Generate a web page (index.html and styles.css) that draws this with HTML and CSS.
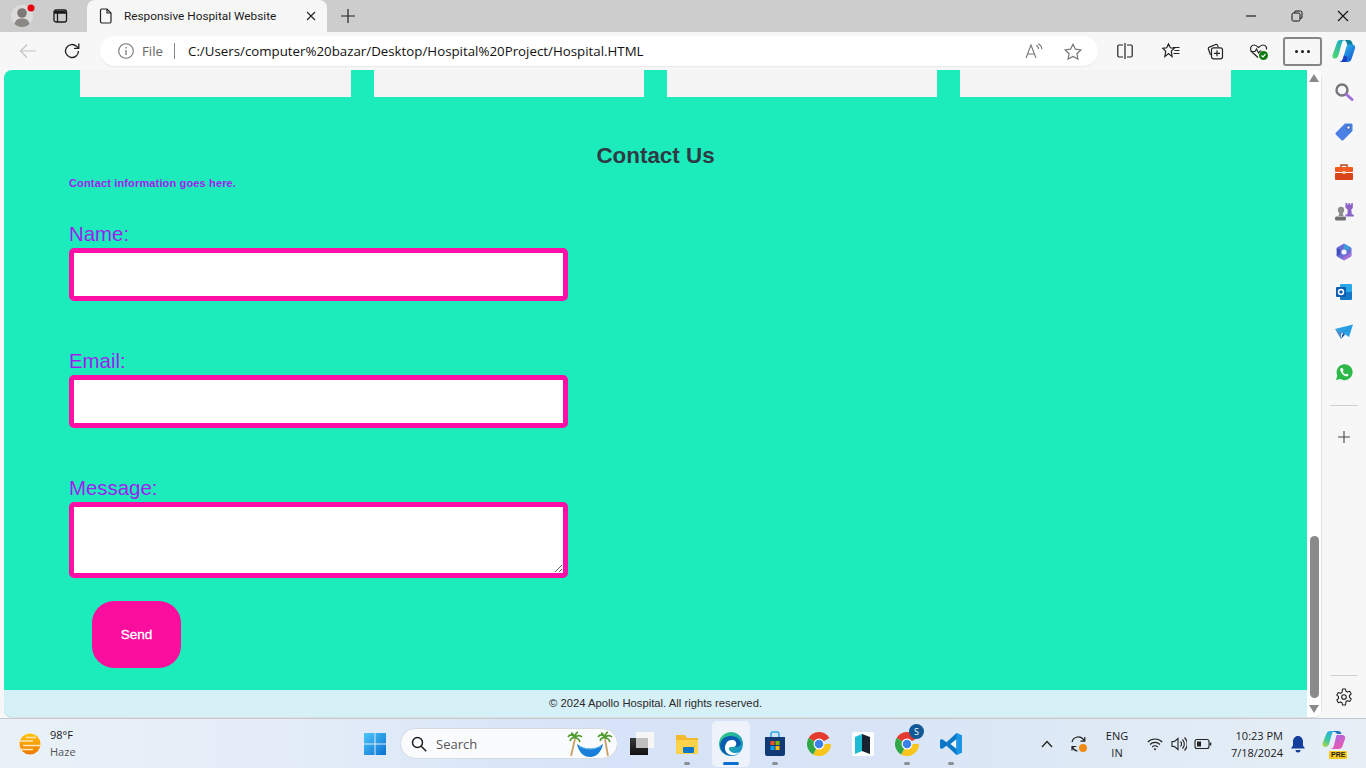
FILE: index.html
```html
<!DOCTYPE html>
<html lang="en">
<head>
<meta charset="utf-8">
<title>Responsive Hospital Website</title>
<link rel="stylesheet" href="styles.css">
</head>
<body>
<div class="tabstrip">
  <div class="slot s-avatar">
    <svg class="avatar" width="26" height="26" viewBox="0 0 26 26"><circle cx="11" cy="13" r="11" fill="#dcdcdc"/><circle cx="11" cy="10" r="4.800" fill="#7d7a76"/><path d="M3.500 21c1-4.500 4-5.500 7.500-5.500s6.500 1 7.500 5.500c-2 2-4.500 3-7.500 3s-5.500-1-7.500-3z" fill="#8b8884"/><circle cx="20" cy="5" r="3.500" fill="#e8000d"/></svg>
    </div>
  <div class="slot s-tabs">
    <svg width="16" height="16" viewBox="0 0 16 16" fill="none" stroke="#1a1a1a" stroke-width="1.300"><rect x="2" y="2" width="12.500" height="12" rx="2"/><path d="M2 5h12.500M5.500 5v9" /><path d="M2.500 3h11v2h-11z" fill="#1a1a1a" stroke="none"/></svg>
  </div>
  <div class="tab">
    <svg class="tab-doc" width="14" height="16" viewBox="0 0 14 16" fill="none" stroke="#222" stroke-width="1.200"><path d="M2.500 1h5.500l4 4v8.500a1.500 1.500 0 0 1-1.500 1.500h-8a1.500 1.500 0 0 1-1-1.500v-11a1.500 1.500 0 0 1 1-1.500z"/><path d="M8 1v4h4"/></svg>
    <span class="tab-title">Responsive Hospital Website</span>
    <svg class="tab-x" width="10" height="10" viewBox="0 0 10 10" stroke="#222" stroke-width="1.100"><path d="M1 1l8 8M9 1l-8 8"/></svg>
  </div>
  <div class="slot s-plus">
    <svg width="14" height="14" viewBox="0 0 14 14" stroke="#222" stroke-width="1.200"><path d="M7 0v14M0 7h14"/></svg>
  </div>
  <div class="winctl">
    <div class="slot s-win"><svg width="12" height="12" viewBox="0 0 12 12" stroke="#111" stroke-width="1.100"><path d="M1 6h10"/></svg></div>
    <div class="slot s-win"><svg width="12" height="12" viewBox="0 0 12 12" fill="none" stroke="#111" stroke-width="1"><rect x="1" y="3" width="8" height="8" rx="1.500"/><path d="M3.500 3v-.500a1.500 1.500 0 0 1 1.500-1.500h4.500a1.500 1.500 0 0 1 1.500 1.500v4.500a1.500 1.500 0 0 1-1.500 1.500h-.500"/></svg></div>
    <div class="slot s-win"><svg width="12" height="12" viewBox="0 0 12 12" stroke="#111" stroke-width="1.100"><path d="M1 1l10 10M11 1l-10 10"/></svg></div>
  </div>
</div>

<div class="toolbar">
  <div class="slot s-back"><svg width="18" height="16" viewBox="0 0 18 16" fill="none" stroke="#c4c4c4" stroke-width="1.200"><path d="M17 8H1.500M8 1.500L1.500 8 8 14.500"/></svg></div>
  <div class="slot s-refresh"><svg width="18" height="18" viewBox="0 0 18 18" fill="none" stroke="#222" stroke-width="1.300"><path d="M15.500 9a6.500 6.500 0 1 1-2-4.700L15.500 6"/><path d="M15.800 1.500V6.300H11"/></svg></div>
  <div class="address">
    <svg class="a-info" width="16" height="16" viewBox="0 0 16 16" fill="none" stroke="#777" stroke-width="1.100"><circle cx="8" cy="8" r="7.300"/><path d="M8 7v5M8 4v1.500" stroke-width="1.300"/></svg>
    <span class="a-file">File</span>
    <span class="a-sep"></span>
    <span class="a-url">C:/Users/computer%20bazar/Desktop/Hospital%20Project/Hospital.HTML</span>
    <svg class="a-read" width="18" height="16" viewBox="0 0 18 16" fill="none" stroke="#777" stroke-width="1.100"><path d="M1 15L6 2l5 13M2.800 11h6.400"/><path d="M11 2.500c1.500.5 2.500 2 2.500 3.500M13 .8c2.300 1 3.800 3 3.800 5.500"/></svg>
    <svg class="a-star" width="18" height="17" viewBox="0 0 18 17" fill="none" stroke="#777" stroke-width="1.200"><path d="M9 1.200l2.400 5 5.500.7-4 3.800 1 5.400L9 13.500l-4.900 2.600 1-5.400-4-3.800 5.500-.7z"/></svg>
  </div>
  <div class="slot s-tool s-first"><svg width="16" height="16" viewBox="0 0 16 16" fill="none" stroke="#222" stroke-width="1.200"><path d="M6 2H2a1.200 1.200 0 0 0-1.200 1.200v9.600A1.200 1.200 0 0 0 2 14h4M10 2h4a1.200 1.200 0 0 1 1.200 1.200v9.600A1.200 1.200 0 0 1 14 14h-4M8 0v16"/></svg></div>
  <div class="slot s-tool s-gap"><svg width="18" height="18" viewBox="0 0 18 18" fill="none" stroke="#222" stroke-width="1.200"><path d="M6.500 2l1.800 3.800 4 .5-3 2.800.8 5.500-3.600-3-3.600 3 .8-5.500-3-2.800 4-.5zM11 5.500h6.500M12.500 8.500h5M11.500 11.500h6"/></svg></div>
  <div class="slot s-tool"><svg width="18" height="18" viewBox="0 0 18 18" fill="none" stroke="#222" stroke-width="1.200"><path d="M4.500 13L2.400 7a1.500 1.500 0 0 1 1-1.900l6.200-2.600a1.500 1.500 0 0 1 2 .9l.6 1.600"/><rect x="5.500" y="5.800" width="11" height="11" rx="2"/><path d="M11 8.300v6M8 11.300h6"/></svg></div>
  <div class="slot s-tool"><svg width="20" height="20" viewBox="0 0 20 20" fill="none"><path d="M9 16.500L3 11c-3-3-1-7 2-7 2 0 3 1 4.500 2.500C11 5 12 4 14 4c2.500 0 4 2 3.500 4.500" stroke="#222" stroke-width="1.200"/><path d="M1.500 10.500H6l1.500-2.500 2 4 1.500-2h1.500" stroke="#222" stroke-width="1.100"/><circle cx="14.500" cy="14.500" r="4.500" fill="#107c10"/><path d="M12.500 14.500l1.500 1.500 2.500-2.800" stroke="#fff" stroke-width="1.200"/></svg></div>
  <div class="more"><i></i><i></i><i></i></div>
  <div class="slot s-copilot">
    <svg width="24" height="24" viewBox="0 0 24 24"><defs><linearGradient id="cpa" x1="0" y1="0" x2="1" y2="1"><stop offset="0" stop-color="#2fc8f0"/><stop offset="1" stop-color="#1450d0"/></linearGradient><linearGradient id="cpb" x1="0.800" y1="0" x2="0.200" y2="1"><stop offset="0" stop-color="#1ca8c8"/><stop offset="1" stop-color="#4ed870"/></linearGradient></defs><path d="M9 1h8c2 0 3 1.500 3.300 3l.5 2h-5.500l-.8-2.500C14.300 2 13 1 12 1z" fill="#0b7f9c"/><path d="M8 1h5c-1.500 0-2.600 1.200-3 2.500L6.500 16c-.6 2-1.800 3.500-3.800 3.500C.8 19.500 0 17.800.6 16L5 3.500C5.500 2 6.500 1 8 1z" fill="url(#cpb)"/><path d="M16.500 5.500h3.500c2.500 0 3.700 2 3 4l-3.500 10.500C19 22 17.500 23 15.500 23H7c2 0 3.200-1.200 3.800-3L14.500 7.500c.3-1.200 1-2 2-2z" fill="url(#cpa)"/><path d="M7 23c2 0 3.200-1.200 3.800-3l1.200-3.500 3.500 1.500-1 5z" fill="#1c3ec8"/></svg>
  </div>
</div>

<div class="workspace">
  <div class="viewport">
    <main class="page">
      <div class="cards"><div class="card"></div><div class="card"></div><div class="card"></div><div class="card"></div></div>
      <section class="contact">
        <h2>Contact Us</h2>
        <p class="info">Contact information goes here.</p>
        <form class="form">
          <div class="field"><label for="n">Name:</label><input id="n" type="text"></div>
          <div class="field"><label for="e">Email:</label><input id="e" type="text"></div>
          <div class="field"><label for="m">Message:</label><textarea id="m"></textarea></div>
          <button type="button">Send</button>
        </form>
      </section>
      <footer class="foot">© 2024 Apollo Hospital. All rights reserved.</footer>
    </main>
    <div class="scrollbar">
      <span class="arrow up"></span>
      <span class="thumb"></span>
      <span class="arrow down"></span>
    </div>
  </div>
  <aside class="sidebar">
    <div class="side-slot"><svg width="20" height="20" viewBox="0 0 20 20" fill="none"><circle cx="8" cy="8" r="5.500" stroke="#77757a" stroke-width="2.400"/><path d="M12.500 12.500l5.500 5" stroke="#a070d8" stroke-width="3" stroke-linecap="round"/></svg></div>
    <div class="side-slot"><svg width="20" height="20" viewBox="0 0 20 20"><path d="M11 1.500h6c1 0 1.500.5 1.500 1.500v6L9.500 18c-.7.7-1.500.7-2.200 0L2 12.700c-.7-.7-.7-1.500 0-2.200z" fill="#4a80e4"/><circle cx="14.500" cy="5.500" r="1.800" fill="#e8e8f4" stroke="#33508c" stroke-width=".8"/></svg></div>
    <div class="side-slot"><svg width="20" height="18" viewBox="0 0 20 18"><path d="M7 4V2h6v2" fill="none" stroke="#b04a1c" stroke-width="1.500"/><rect x="1" y="4" width="18" height="5" rx="1" fill="#f05a22"/><rect x="1" y="10" width="18" height="7" rx="1" fill="#d8431a"/><rect x="8.500" y="8" width="3" height="3" fill="#f4c8a8"/></svg></div>
    <div class="side-slot"><svg width="20" height="20" viewBox="0 0 20 20"><circle cx="7" cy="8" r="3.200" fill="#8d8d8d"/><path d="M5.500 10h3l1 4h-5z" fill="#8d8d8d"/><rect x="1" y="14.500" width="11" height="4" rx="1.500" fill="#707070"/><path d="M11.500 1h1.700v1.500h1.300V1h1.500v1.500h1.300V1h1.500v5l-1.500 1.500.5 5h2v2h-8.500v-2h2l.5-5L11.500 6z" fill="#8b62c8"/></svg></div>
    <div class="side-slot"><svg width="18" height="18" viewBox="0 0 18 18" stroke-linejoin="round"><path d="M9 1L16 5v8l-7 4-7-4V5z" fill="#6a6fd8" stroke="#6a6fd8" stroke-width="1"/><path d="M9 1L16 5 12 7.500 9 5.500z" fill="#3aa0d8"/><path d="M16 9v4l-7 4-2-2 6-3z" fill="#b070d8"/><path d="M2 5v8l3.500-2V7z" fill="#4050b8"/><circle cx="9" cy="9" r="2.600" fill="#f4f4fa"/></svg></div>
    <div class="side-slot"><svg width="18" height="18" viewBox="0 0 18 18"><rect x="5" y="1" width="12" height="15" rx="1" fill="#28a8e8"/><path d="M5 9h12v7a1 1 0 0 1-1 1H6a1 1 0 0 1-1-1z" fill="#1478c8"/><rect x="1" y="4" width="10" height="10" rx="1" fill="#0a5cb0"/><circle cx="6" cy="9" r="2.500" fill="none" stroke="#fff" stroke-width="1.500"/></svg></div>
    <div class="side-slot"><svg width="18" height="16" viewBox="0 0 18 16"><path d="M0 5L18 .5 14 13 8 9z" fill="#2aa0e4"/><path d="M8 9l-2 6 4-4.500z" fill="#0a4a94"/><path d="M0 5l8 4 10-8.500L6 10v5z" fill="#1470c4" opacity=".8"/></svg></div>
    <div class="side-slot"><svg width="18" height="18" viewBox="0 0 18 18"><path d="M1 17l1.300-4.500A8 8 0 1 1 5.400 16z" fill="#2fb84a"/><path d="M6 5c-1 .8-1 2.200 0 4s3 3.800 4.800 4.300c1.400.3 2.500-.5 2.700-1.600l-2-1.200-1 .9c-1-.4-2.300-1.700-2.800-2.900l.9-1L7.500 5z" fill="#fff"/></svg></div>
    <div class="side-rule rule-top"></div>
    <div class="side-slot"><svg width="14" height="14" viewBox="0 0 14 14" stroke="#444" stroke-width="1.100"><path d="M7 1v12M1 7h12"/></svg></div>
    <div class="side-rule rule-bottom"></div>
    <div class="side-gear"><svg width="18" height="18" viewBox="0 0 18 18" fill="none" stroke="#222" stroke-width="1.100"><circle cx="9" cy="9" r="2.300"/><path d="M7.500 1h3l.5 2.300 1.500.8 2.200-.8 1.500 2.600-1.700 1.600v1.800l1.700 1.600-1.500 2.600-2.200-.8-1.500.8L10.500 17h-3L7 14.700l-1.500-.8-2.200.8-1.500-2.600 1.700-1.600V8.700L1.800 7.100l1.500-2.600 2.200.8L7 4.500z" stroke-linejoin="round"/></svg></div>
  </aside>
</div>

<footer class="taskbar">
  <div class="weather">
    <svg width="24" height="24" viewBox="0 0 24 24"><defs><linearGradient id="sun" x1="0" y1="0" x2="0" y2="1"><stop offset="0" stop-color="#ffc400"/><stop offset="1" stop-color="#f07800"/></linearGradient></defs><circle cx="12" cy="12" r="10.500" fill="url(#sun)"/><path d="M0 9h15M5 13.500h19M0 17.500h15M8 5.500h10" stroke="#f8e8c0" stroke-width="1.400"/></svg>
    <div class="w-text"><span>98°F</span><span class="w-sub">Haze</span></div>
  </div>
  <div class="slot s-task s-start"><svg width="24" height="24" viewBox="0 0 24 24"><defs><linearGradient id="win" x1="0" y1="0" x2="1" y2="1"><stop offset="0" stop-color="#4cc8fa"/><stop offset="1" stop-color="#0a70d0"/></linearGradient></defs><path d="M1 1h10.500v10.500H1zM12.500 1H23v10.500H12.500zM1 12.500h10.500V23H1zM12.500 12.500H23V23H12.500z" fill="url(#win)"/></svg></div>
  <div class="search">
    <svg class="search-ico" width="16" height="16" viewBox="0 0 16 16" fill="none" stroke="#1c1c1c" stroke-width="1.500"><circle cx="6.500" cy="6.500" r="5"/><path d="M10.200 10.200l5 5"/></svg>
    <span class="search-text">Search</span>
    <svg class="search-art" width="46" height="28" viewBox="0 0 46 28" fill="none"><path d="M8 9L4 26M38 9l3 17" stroke="#c9a066" stroke-width="1.800"/><path d="M10 14c8 6 18 6 26 0-2 9-7 13-13 13S12 23 10 14z" fill="#1a7fd8"/><path d="M12 16c7 4 15 4 22 0" stroke="#6cc0f0" stroke-width="1"/><path d="M8 8C6 4 3 4 1 7M8 8C6 7 4 8 3 11M8 8C8 5 9 3 11 2M8 8c2-3 5-3 7-1M8 8c2 0 4 1 5 4M8 8C7 5 6 3 4 3M38 8c-2-4-5-4-7-1M38 8c-2-1-4 0-5 3M38 8c0-3 1-5 3-6M38 8c2-3 5-3 7-1M38 8c2 0 4 1 5 4M38 8c-1-3-2-5-4-5" stroke="#4f9a2c" stroke-width="1.600"/></svg>
  </div>
  <div class="slot s-task s-view"><svg width="24" height="24" viewBox="0 0 24 24"><defs><linearGradient id="tvd" x1="0" y1="0" x2="0" y2="1"><stop offset="0" stop-color="#3a3a3a"/><stop offset="1" stop-color="#111"/></linearGradient></defs><rect x="6" y="0" width="18" height="16" fill="#f6f6f6"/><rect x="0" y="6" width="18" height="17" fill="url(#tvd)"/><path d="M6 6h12v10H6z" fill="#c0c0c0"/></svg></div>
  <div class="slot s-task s-app">
    <svg width="24" height="24" viewBox="0 0 24 24"><path d="M1 3h9l2 3h11v15H1z" fill="#f2b82e"/><rect x="1" y="8" width="22" height="14" rx="1" fill="#ffd24c"/><rect x="8" y="15" width="11" height="6" rx="1" fill="#0a78c8"/></svg>
    <span class="dot"></span>
  </div>
  <div class="slot s-task s-app s-active">
    <svg width="26" height="26" viewBox="0 0 26 26"><defs><linearGradient id="edge" x1="0" y1="0" x2="1" y2="1"><stop offset="0" stop-color="#34d07a"/><stop offset="1" stop-color="#1088d8"/></linearGradient></defs><circle cx="13" cy="13" r="12" fill="url(#edge)"/><path d="M2 14C3 7 8 5 13 5c5 0 9 3 10 7 0 3-3 4-6 4 2-3 0-6-4-6-5 0-7 5-5 9 1 3 5 5 9 5-7 2-15-2-15-10z" fill="#0a5cb0"/><path d="M8 13c1-3 3-4 6-4 3 0 5 2 4 5-1 2-3 2-5 2-2 0-3 2-1 4 2 2 6 3 9 1-3 4-9 4-12 1-2-2-3-6-1-9z" fill="#fff"/></svg>
    <span class="dot dot-active"></span>
  </div>
  <div class="slot s-task s-app">
    <svg width="24" height="26" viewBox="0 0 24 26"><path d="M8 7V3c0-1.500 1-2 2-2h4c1 0 2 .5 2 2v4" fill="none" stroke="#2aa8e8" stroke-width="1.500"/><path d="M2 6h20v17c0 1-1 2-2 2H4c-1 0-2-1-2-2z" fill="#123a74"/><rect x="7.500" y="10" width="4" height="4" fill="#f25022"/><rect x="12.500" y="10" width="4" height="4" fill="#7fba00"/><rect x="7.500" y="15" width="4" height="4" fill="#00a4ef"/><rect x="12.500" y="15" width="4" height="4" fill="#ffb900"/></svg>
    <span class="dot"></span>
  </div>
  <div class="slot s-task s-app">
    <svg width="24" height="24" viewBox="0 0 24 24"><path d="M12 12L22.400 6A12 12 0 0 0 1.600 6z" fill="#e53a30"/><path d="M12 12h12A12 12 0 0 1 6 22.400z" fill="#f8c51c"/><path d="M12 12L6 22.400A12 12 0 0 1 1.600 6z" fill="#30a848"/><circle cx="12" cy="12" r="5.500" fill="#fff"/><circle cx="12" cy="12" r="4.300" fill="#3a80e8"/></svg>
  </div>
  <div class="slot s-task s-app">
    <svg width="22" height="24" viewBox="0 0 22 24"><rect width="22" height="24" rx="2" fill="#fdfdfd"/><path d="M3 5l7-3v17l-7 3z" fill="#1cbcd4"/><path d="M10 2l8 3v17l-8-3z" fill="#16222e"/></svg>
  </div>
  <div class="slot s-task s-app">
    <svg width="24" height="24" viewBox="0 0 24 24"><path d="M12 12L22.400 6A12 12 0 0 0 1.600 6z" fill="#e53a30"/><path d="M12 12h12A12 12 0 0 1 6 22.400z" fill="#f8c51c"/><path d="M12 12L6 22.400A12 12 0 0 1 1.600 6z" fill="#30a848"/><circle cx="12" cy="12" r="5.500" fill="#fff"/><circle cx="12" cy="12" r="4.300" fill="#3a80e8"/></svg>
    <span class="badge">S</span>
    <span class="dot"></span>
  </div>
  <div class="slot s-task s-app">
    <svg width="24" height="24" viewBox="0 0 24 24"><path d="M17.500 1L23 3.500v17L17.500 23 7.500 13.700 3 17 1 16V8l2-1 4.500 3.300z" fill="#0a78c8"/><path d="M17.500 7L11.500 12l6 5z" fill="#f0f6fb"/><path d="M17.500 1L23 3.500v17L17.500 23z" fill="#1c96e8"/></svg>
    <span class="dot"></span>
  </div>
  <div class="tray">
    <div class="slot t-chev"><svg width="12" height="8" viewBox="0 0 12 8" fill="none" stroke="#222" stroke-width="1.300"><path d="M1 7l5-5.500L11 7"/></svg></div>
    <div class="slot t-sync"><svg width="20" height="20" viewBox="0 0 20 20" fill="none" stroke="#222" stroke-width="1.200"><path d="M3 8a6.500 6.500 0 0 1 11-3l1.500 2M15.800 3v4.200H11.500M3 12v4.500M3 12.500h4.300M3.500 12.500a6 6 0 0 0 5 4.500"/><circle cx="14" cy="14" r="4" fill="#f08c14" stroke="none"/></svg></div>
    <div class="lang"><span>ENG</span><span>IN</span></div>
    <div class="slot t-ico t-wifi"><svg width="16" height="14" viewBox="0 0 16 14" fill="none" stroke="#222" stroke-width="1.100"><path d="M.8 5a10 10 0 0 1 14.400 0M3 7.500a7 7 0 0 1 10 0M5.200 10a4 4 0 0 1 5.600 0"/><circle cx="8" cy="12.300" r="1" fill="#222" stroke="none"/></svg></div>
    <div class="slot t-ico"><svg width="16" height="16" viewBox="0 0 16 16" fill="none" stroke="#222" stroke-width="1.100"><path d="M1 5.500h2.500L7 2.500v11L3.500 10.500H1zM9.500 5.500a3.500 3.500 0 0 1 0 5M11.500 3.500a6.500 6.500 0 0 1 0 9M13.500 1.500a9 9 0 0 1 0 13"/></svg></div>
    <div class="slot t-ico"><svg width="18" height="12" viewBox="0 0 18 12" fill="none" stroke="#222" stroke-width="1.100"><rect x="1" y="1.500" width="14" height="9" rx="2"/><rect x="3" y="3.500" width="4" height="5" fill="#222" stroke="none"/><path d="M16.500 4.500v3" stroke-width="1.500"/></svg></div>
    <div class="clock"><span>10:23 PM</span><span>7/18/2024</span></div>
    <div class="slot t-bell"><svg width="16" height="18" viewBox="0 0 16 18"><path d="M8 1c3 0 5 2.500 5 5.500v4l2 3H1l2-3v-4C3 3.500 5 1 8 1z" fill="#123f9c"/><path d="M5.500 15a2.500 2.500 0 0 0 5 0z" fill="#123f9c"/></svg></div>
    <div class="slot t-copilot">
      <svg class="tc-svg" width="24" height="20" viewBox="0 0 24 20"><defs><linearGradient id="cpl" x1="0.800" y1="0" x2="0.100" y2="1"><stop offset="0" stop-color="#2ca8e8"/><stop offset=".55" stop-color="#38c8a0"/><stop offset="1" stop-color="#b8d848"/></linearGradient><linearGradient id="cpr" x1="0.200" y1="0" x2="0.800" y2="1"><stop offset="0" stop-color="#a868e8"/><stop offset="1" stop-color="#f058a8"/></linearGradient></defs><path d="M8 1h8c2 0 3 1 3.500 3H15c-1-2-2-2-3-2z" fill="#1c6ec0"/><path d="M8 1h5c-1.500 0-2.600 1.200-3 2.500L7 14c-.6 2-2 3-3.800 3C1 17 0 15 .6 13L4.500 3.500C5 2 6.500 1 8 1z" fill="url(#cpl)"/><path d="M15 5h5c2.500 0 3.700 2 3 4l-2.500 7c-.6 2-2 3-4 3H8c2 0 3.200-1.200 3.800-3L14 7c.2-1 .5-2 1-2z" fill="url(#cpr)"/></svg>
      <span class="pre">PRE</span>
    </div>
  </div>
</footer>
</body>
</html>
```

FILE: styles.css
```css
* { box-sizing: border-box; }
html, body { margin: 0; padding: 0; }
body {
  width: 1366px;
  height: 768px;
  overflow: hidden;
  display: flex;
  flex-direction: column;
  background: #f7f7f7;
  font-family: "Liberation Sans", Arial, sans-serif;
}
svg { display: block; flex: none; }
.slot { display: flex; align-items: center; justify-content: center; flex: none; position: relative; }

/* tab strip */
.tabstrip { height: 32px; flex: none; background: #cdcdcd; display: flex; align-items: stretch; }
.s-avatar { width: 44px; }
.avatar { margin-left: 4px; }
.s-tabs { width: 32px; }
.tab {
  width: 240px;
  margin-left: 11px;
  background: #f7f7f7;
  border-radius: 8px 8px 0 0;
  display: flex;
  align-items: center;
  padding-left: 12px;
}
.tab-title { margin-left: 11px; font: 11.8px/16px Roboto, "Open Sans", sans-serif; color: #1a1a1a; width: 182px; white-space: nowrap; }
.s-plus { width: 32px; margin-left: 5px; }
.winctl { margin-left: auto; display: flex; }
.s-win { width: 46px; }

/* toolbar */
.toolbar { height: 38px; flex: none; background: #f7f7f7; display: flex; align-items: center; }
.s-back { width: 36px; margin-left: 10px; }
.s-refresh { width: 36px; margin-left: 8px; }
.address {
  width: 998px;
  height: 30px;
  margin-left: 10px;
  background: #fff;
  border-radius: 15px;
  display: flex;
  align-items: center;
  padding-left: 18px;
  box-shadow: 0 1px 2px rgba(0,0,0,.06);
}
.a-file { margin-left: 8px; font: 13.2px/16px "Open Sans", sans-serif; color: #666; width: 24px; }
.a-sep { width: 1px; height: 16px; background: #888; margin-left: 8px; }
.a-url { margin-left: 13px; font: 13.3px/16px "Open Sans", sans-serif; color: #111; white-space: nowrap; width: 746px; }
.a-read { margin-left: 91px; }
.a-star { margin-left: 21px; }
.s-tool { width: 44px; }
.s-first { margin-left: 5px; }
.s-gap { margin-left: 2px; }
.more {
  width: 39px;
  height: 29px;
  margin-left: 2px;
  border: 2px solid #858585;
  border-radius: 3px;
  display: flex;
  align-items: center;
  justify-content: center;
  gap: 3px;
}
.more i { width: 3px; height: 3px; background: #1a1a1a; border-radius: 50%; }
.s-copilot { width: 44px; }

/* workspace */
.workspace { flex: none; height: 648px; display: flex; padding-left: 4px; }
.viewport {
  width: 1318px;
  height: 648px;
  display: flex;
  border-radius: 8px;
  overflow: hidden;
  background: #fff;
  border-bottom: 1px solid #dedede;
}
.page { width: 1303px; background: #1cebbc; display: flex; flex-direction: column; height: 647px; }
.cards { display: grid; grid-template-columns: 271px 270px 270px 271px; gap: 23px; height: 27px; margin: 0 76px; flex: none; }
.card { background: #f4f4f4; }
.contact { flex: 1; padding: 46px 65px 0; }
h2 { margin: 0; text-align: center; font-size: 22.4px; line-height: 26px; font-weight: 700; color: #2e3a44; }
.info { margin: 8px 0 0; font-size: 11px; line-height: 13px; font-weight: 700; color: #a01cf0; letter-spacing: .15px; }
.form { display: flex; flex-direction: column; margin-top: 33px; align-items: flex-start; }
.field { margin-bottom: 49px; display: flex; flex-direction: column; }
.field:last-of-type { margin-bottom: 23px; }
label { font-size: 20.4px; line-height: 23px; color: #a01cf0; margin-bottom: 2px; }
input, textarea {
  width: 499px;
  border: 5px solid #ff0fa5;
  border-radius: 5px;
  background: #fff;
  margin: 0;
  padding: 0;
  display: block;
  outline: none;
}
input { height: 53px; }
textarea { height: 76px; }
button {
  width: 89px;
  height: 67px;
  margin-left: 23px;
  border: 0;
  border-radius: 22px;
  background: #fb0e9e;
  color: #fff;
  font: 400 13.6px "Liberation Sans", Arial, sans-serif;
  -webkit-text-stroke: .3px #fff;
}
.foot { height: 27px; flex: none; background: #d6f0f7; text-align: center; font-size: 11.27px; line-height: 27px; color: #2a2a2a; }

.scrollbar { width: 15px; background: #fff; display: flex; flex-direction: column; align-items: center; position: relative; padding-top: 4px; border-right: 1px solid #e2e2e2; }
.arrow { width: 0; height: 0; border-left: 5px solid transparent; border-right: 5px solid transparent; flex: none; }
.up { border-bottom: 8px solid #8a8a8a; }
.down { border-top: 8px solid #8a8a8a; margin-top: 7px; }
.thumb { width: 9px; height: 162px; background: #8a8a8a; border-radius: 5px; margin-top: 454px; flex: none; }

.sidebar { width: 44px; flex: none; display: flex; flex-direction: column; align-items: center; padding-top: 2px; }
.side-slot { height: 40px; width: 44px; display: flex; align-items: center; justify-content: center; flex: none; }
.side-rule { width: 28px; height: 1px; background: #cfcfcf; flex: none; }
.rule-top { margin: 13px 0 11px; }
.rule-bottom { margin-top: auto; }
.side-gear { height: 42px; display: flex; align-items: center; flex: none; }

/* taskbar */
.taskbar {
  flex: none;
  height: 50px;
  display: flex;
  align-items: center;
  border-top: 1px solid #c6c9ce;
  background: linear-gradient(90deg, #e9f1f8 0%, #e4edf8 20%, #d6e3f8 45%, #d9e5f6 65%, #e6eff6 100%);
}
.weather { width: 353px; display: flex; align-items: center; padding-left: 18px; flex: none; }
.w-text { display: flex; flex-direction: column; margin: -2px 0 0 8px; font: 11px/17px "Open Sans", sans-serif; color: #1a1a1a; }
.w-sub { color: #555; }
.s-task { width: 44px; height: 40px; }
.search {
  width: 218px;
  height: 31px;
  margin-left: 3px;
  background: #fafbfd;
  border-radius: 16px;
  border: 1px solid #d5dbe3;
  display: flex;
  align-items: center;
  padding-left: 10px;
  flex: none;
}
.search-text { margin-left: 9px; font: 13px/16px "Open Sans", sans-serif; color: #555; width: 121px; }
.search-art { margin-left: 10px; }
.s-view { margin-left: 2px; }
.s-view + .s-app { margin-left: 1px; }
.s-active { background: #eef3fb; border-radius: 5px; height: 46px; width: 38px; margin: 0 3px; }
.dot { position: absolute; left: 50%; bottom: -1px; width: 6px; height: 3px; margin-left: -3px; border-radius: 2px; background: #8a8f96; }
.dot-active { width: 16px; margin-left: -8px; bottom: 2px; background: #0a6fd0; }
.badge { position: absolute; left: 24px; top: 0; width: 15px; height: 15px; border-radius: 50%; background: #0f5a96; color: #fff; font: 9px/15px "Open Sans", sans-serif; text-align: center; }
.tray { display: flex; align-items: center; margin-left: 60px; height: 100%; }
.t-chev { width: 28px; }
.t-sync { width: 36px; }
.lang { width: 40px; display: flex; flex-direction: column; align-items: center; font: 11px/17px "Open Sans", sans-serif; color: #1a1a1a; }
.t-wifi { margin-left: 6px; }
.t-ico { width: 24px; }
.clock { width: 70px; display: flex; flex-direction: column; align-items: flex-end; font: 11px/17px "Open Sans", sans-serif; color: #1a1a1a; margin-left: -2px; }
.t-bell { width: 30px; }
.t-copilot { width: 40px; height: 30px; margin-left: 1px; }
.tc-svg { margin-top: -7px; }
.pre { position: absolute; left: 15px; bottom: 0; background: #f8c81c; color: #222; font: 700 7px/8px "Liberation Sans", sans-serif; padding: 0 2px; border-radius: 1px; }
```
